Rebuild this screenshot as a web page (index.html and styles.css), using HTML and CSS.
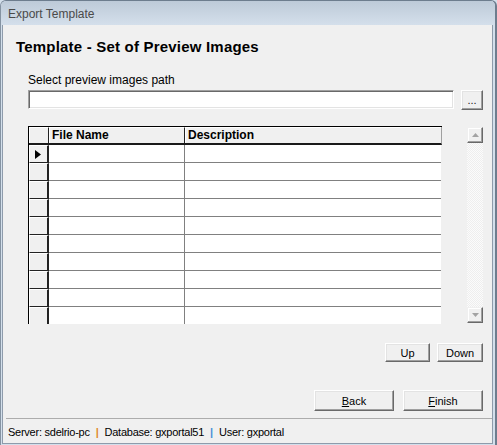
FILE: index.html
```html
<!DOCTYPE html>
<html>
<head>
<meta charset="utf-8">
<title>Export Template</title>
<link rel="stylesheet" href="styles.css">
</head>
<body>
<div class="window">
  <div class="titlebar">Export Template</div>
  <div class="frame">
    <div class="client">
      <h1 class="heading">Template - Set of Preview Images</h1>
      <div class="path-label">Select preview images path</div>
      <div class="path-row">
        <div class="textbox"></div>
        <button class="btn browse">...</button>
      </div>
      <div class="grid-area">
        <div class="grid">
          <div class="grid-head">
            <div class="corner"></div>
            <div class="col-head col-name">File Name</div>
            <div class="col-head col-desc">Description</div>
          </div>
          <div class="grid-line">
            <div class="row-head"><svg class="row-arrow" width="7" height="9" viewBox="0 0 7 9"><path d="M0 0 L6 4.5 L0 9 Z" fill="#000"/></svg></div>
            <div class="cell cell-name"></div><div class="cell cell-desc"></div>
          </div>
          <div class="grid-line"><div class="row-head"></div><div class="cell cell-name"></div><div class="cell cell-desc"></div></div>
          <div class="grid-line"><div class="row-head"></div><div class="cell cell-name"></div><div class="cell cell-desc"></div></div>
          <div class="grid-line"><div class="row-head"></div><div class="cell cell-name"></div><div class="cell cell-desc"></div></div>
          <div class="grid-line"><div class="row-head"></div><div class="cell cell-name"></div><div class="cell cell-desc"></div></div>
          <div class="grid-line"><div class="row-head"></div><div class="cell cell-name"></div><div class="cell cell-desc"></div></div>
          <div class="grid-line"><div class="row-head"></div><div class="cell cell-name"></div><div class="cell cell-desc"></div></div>
          <div class="grid-line"><div class="row-head"></div><div class="cell cell-name"></div><div class="cell cell-desc"></div></div>
          <div class="grid-line"><div class="row-head"></div><div class="cell cell-name"></div><div class="cell cell-desc"></div></div>
          <div class="grid-line"><div class="row-head"></div><div class="cell cell-name"></div><div class="cell cell-desc"></div></div>
        </div>
        <div class="vscroll">
          <div class="scroll-btn"><svg width="7" height="4" viewBox="0 0 7 4"><path d="M3.5 0 L7 4 L0 4 Z" fill="#a3a3a3"/></svg></div>
          <div class="scroll-track"></div>
          <div class="scroll-btn"><svg width="7" height="4" viewBox="0 0 7 4"><path d="M0 0 L7 0 L3.5 4 Z" fill="#a3a3a3"/></svg></div>
        </div>
      </div>
      <div class="move-row">
        <button class="btn btn-up">Up</button>
        <button class="btn btn-down">Down</button>
      </div>
      <div class="nav-row">
        <button class="btn btn-nav"><u>B</u>ack</button>
        <button class="btn btn-nav"><u>F</u>inish</button>
      </div>
      <div class="status">Server: sdelrio-pc<span class="pipe pipe-orange">|</span>Database: gxportal51<span class="pipe pipe-blue">|</span>User: gxportal</div>
    </div>
  </div>
</div>
</body>
</html>
```

FILE: styles.css
```css
html, body {
  margin: 0;
  padding: 0;
}
body {
  width: 497px;
  height: 445px;
  overflow: hidden;
  background: #d3dfeb;
  font-family: "Liberation Sans", Arial, sans-serif;
  color: #000;
}
.window {
  width: 497px;
  height: 445px;
  box-sizing: border-box;
  border-top: 1px solid #6d7d8e;
  border-left: 1px solid #8593a2;
  border-right: 2px solid #6d7d8e;
  border-radius: 6px 6px 0 0;
  background: #d3dfeb;
  display: flex;
  flex-direction: column;
  overflow: hidden;
}
.titlebar {
  height: 24px;
  box-sizing: border-box;
  padding: 2px 0 0 7px;
  line-height: 22px;
  font-size: 12px;
  color: #4a4a4a;
  background: linear-gradient(#bdcad8, #d4dfeb);
  flex: none;
}
.frame {
  flex: 1;
  padding: 0 2px 1px 1px;
  display: flex;
}
.client {
  flex: 1;
  background: #f0f0f0;
  border: 1px solid #8e9bab;
  border-top: none;
  display: flex;
  flex-direction: column;
}
.heading {
  margin: 13px 0 0 13px;
  font-size: 15px;
  line-height: 18px;
  font-weight: bold;
  letter-spacing: 0.2px;
}
.path-label {
  margin: 17px 0 0 25px;
  font-size: 12px;
  line-height: 14px;
}
.path-row {
  margin: 3px 9px 0 25px;
  display: flex;
  gap: 7px;
  align-items: flex-start;
}
.textbox {
  flex: 1;
  height: 19px;
  box-sizing: border-box;
  background: #fff;
  border: 1px solid;
  border-color: #a0a0a0 #fff #fff #a0a0a0;
  box-shadow: inset 1px 1px #696969, inset -1px -1px #e3e3e3;
}
.btn {
  box-sizing: border-box;
  margin: 0;
  padding: 0;
  background: #f0f0f0;
  border: 1px solid;
  border-color: #fff #696969 #696969 #fff;
  box-shadow: inset -1px -1px #a0a0a0, inset 1px 1px #e3e3e3;
  font-family: "Liberation Sans", Arial, sans-serif;
  font-size: 11px;
  color: #000;
  text-align: center;
}
.browse {
  width: 22px;
  height: 20px;
  line-height: 14px;
  color: #222;
}
.grid-area {
  margin: 16px 9px 0 25px;
  display: flex;
  gap: 25px;
  align-items: flex-start;
}
.grid {
  width: 414px;
  height: 198px;
  box-sizing: border-box;
  border-top: 1px solid #000;
  border-left: 1px solid #000;
  overflow: hidden;
}
.grid-head {
  display: flex;
  width: 413px;
  height: 18px;
  box-sizing: border-box;
  border-bottom: 2px solid #1a1a1a;
  border-right: 1px solid #a0a0a0;
  background: #f0f0f0;
}
.corner {
  width: 20px;
  box-sizing: border-box;
  border-top: 1px solid #fff;
  border-left: 1px solid #fff;
  border-right: 1px solid #222;
}
.col-head {
  box-sizing: border-box;
  border-top: 1px solid #fff;
  border-left: 1px solid #fff;
  font-size: 12px;
  font-weight: bold;
  line-height: 15px;
  padding-left: 2px;
  white-space: nowrap;
}
.col-name {
  width: 136px;
  border-right: 1px solid #222;
}
.col-desc {
  width: 256px;
}
.grid-line {
  display: flex;
  width: 412px;
  height: 18px;
  background: #fff;
}
.row-head {
  width: 20px;
  box-sizing: border-box;
  background: #f0f0f0;
  border-top: 1px solid #fff;
  border-left: 1px solid #fff;
  border-bottom: 1px solid #222;
  border-right: 2px solid #222;
  display: flex;
  align-items: center;
  justify-content: center;
}
.row-arrow {
  display: block;
}
.cell {
  box-sizing: border-box;
  border-bottom: 1px solid #808080;
}
.cell-name {
  width: 136px;
  border-right: 1px solid #808080;
}
.cell-desc {
  width: 256px;
}
.vscroll {
  width: 16px;
  height: 196px;
  margin-top: 1px;
  display: flex;
  flex-direction: column;
}
.scroll-btn {
  width: 16px;
  height: 16px;
  box-sizing: border-box;
  background: #f0f0f0;
  border: 1px solid;
  border-color: #f0f0f0 #696969 #696969 #f0f0f0;
  box-shadow: inset -1px -1px #a0a0a0, inset 1px 1px #fff;
  display: flex;
  align-items: center;
  justify-content: center;
}
.scroll-btn svg {
  display: block;
}
.scroll-track {
  flex: 1;
  background: repeating-conic-gradient(#fbfbfb 0 25%, #eeeeee 0 50%) 0 0 / 2px 2px;
}
.move-row {
  margin: 19px 9px 0 25px;
  display: flex;
  justify-content: flex-end;
  gap: 7px;
}
.btn-up {
  width: 45px;
  height: 19px;
}
.btn-down {
  width: 46px;
  height: 19px;
}
.nav-row {
  margin: 28px 9px 0 25px;
  display: flex;
  justify-content: flex-end;
  gap: 9px;
}
.btn-nav {
  width: 80px;
  height: 21px;
}
.status {
  margin: 7px 0 0 3px;
  border-top: 1px solid #acacac;
  padding: 7px 0 0 2px;
  font-size: 11px;
  line-height: 13px;
  letter-spacing: -0.25px;
  white-space: nowrap;
}
.pipe {
  display: inline-block;
  margin: 0 6px;
  font-weight: bold;
}
.pipe-orange {
  color: #e08a2c;
}
.pipe-blue {
  color: #4a8fd8;
}
```
